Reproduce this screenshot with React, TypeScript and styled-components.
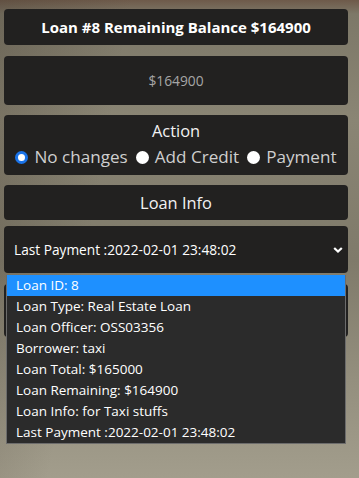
import React from "react";
import styled, { createGlobalStyle } from "styled-components";

const Global = createGlobalStyle`
  html, body { margin: 0; padding: 0; }
  body {
    width: 359px;
    height: 478px;
    overflow: hidden;
    font-family: "Open Sans", "Liberation Sans", sans-serif;
    background:
      linear-gradient(100deg, rgba(60,50,40,0.25) 0%, rgba(0,0,0,0) 30%),
      linear-gradient(180deg, #6e5a4a 0px, #7d7868 14px, #8a8574 120px, #7f7a6a 260px, #948f7e 380px, #a29d8c 478px);
  }
`;

const Wrap = styled.div`
  position: relative;
  width: 344px;
  padding: 9px 0 0 4px;
  display: flex;
  flex-direction: column;
`;

const Panel = styled.div<{ $h: number; $mt: number }>`
  height: ${(p) => p.$h}px;
  margin-top: ${(p) => p.$mt}px;
  background: #222120;
  border-radius: 4px;
  display: flex;
  flex-direction: column;
  align-items: center;
  justify-content: center;
  color: #fff;
`;

const ActionPanel = styled(Panel)`
  justify-content: flex-start;
  padding-top: 5px;
  box-sizing: border-box;
`;

const Title = styled.div`
  font-size: 15px;
  font-weight: 700;
  line-height: 20px;
`;

const Amount = styled.div`
  font-size: 13.8px;
  color: #a6a6a6;
`;

const Heading = styled.div`
  font-size: 16.4px;
  color: #f2f2f2;
  line-height: 22px;
`;

const RadioRow = styled.div`
  display: flex;
  align-items: center;
  gap: 8px;
  margin-top: 4px;
  font-size: 17.1px;
  color: #cfcfcf;
  line-height: 22px;
`;

const RadioItem = styled.label`
  display: flex;
  align-items: center;
  gap: 6px;
`;

const Dot = styled.span<{ $on?: boolean }>`
  width: 13px;
  height: 13px;
  border-radius: 50%;
  box-sizing: border-box;
  background: #fff;
  border: ${(p) => (p.$on ? "3px solid #1a73e8" : "none")};
`;

const SelectBox = styled.div`
  height: 47px;
  margin-top: 6px;
  background: #222120;
  border-radius: 4px;
  display: flex;
  align-items: center;
  justify-content: space-between;
  padding: 0 5px 0 10px;
  color: #fff;
  font-size: 13.7px;
`;

const List = styled.div`
  position: absolute;
  left: 6px;
  top: 275px;
  width: 338px;
  background: #2b2b2b;
  border: 1px solid #6c6c6c;
  border-top: none;
  box-sizing: content-box;
`;

const Option = styled.div<{ $sel?: boolean }>`
  height: 21px;
  line-height: 21px;
  padding-left: 9px;
  font-size: 13.5px;
  color: #fff;
  background: ${(p) => (p.$sel ? "#1e90ff" : "transparent")};
`;

const items = [
  "Loan ID: 8",
  "Loan Type: Real Estate Loan",
  "Loan Officer: OSS03356",
  "Borrower: taxi",
  "Loan Total: $165000",
  "Loan Remaining: $164900",
  "Loan Info: for Taxi stuffs",
  "Last Payment :2022-02-01 23:48:02",
];

export default function App() {
  return (
    <>
      <Global />
      <Wrap>
        <Panel $h={36} $mt={0}>
          <Title>Loan #8 Remaining Balance $164900</Title>
        </Panel>
        <Panel $h={49} $mt={11}>
          <Amount>$164900</Amount>
        </Panel>
        <ActionPanel $h={60} $mt={10}>
          <Heading>Action</Heading>
          <RadioRow>
            <RadioItem>
              <Dot $on />
              No changes
            </RadioItem>
            <RadioItem>
              <Dot />
              Add Credit
            </RadioItem>
            <RadioItem>
              <Dot />
              Payment
            </RadioItem>
          </RadioRow>
        </ActionPanel>
        <Panel $h={35} $mt={10}>
          <Heading>Loan Info</Heading>
        </Panel>
        <SelectBox>
          <span>Last Payment :2022-02-01 23:48:02</span>
          <svg width="10" height="8" viewBox="0 0 10 8">
            <path d="M1.2 2 L5 5.6 L8.8 2" stroke="#fff" strokeWidth="2.2" fill="none" />
          </svg>
        </SelectBox>
        <Panel $h={53} $mt={11} />
        <List>
          {items.map((t, i) => (
            <Option key={t} $sel={i === 0}>
              {t}
            </Option>
          ))}
        </List>
      </Wrap>
    </>
  );
}
